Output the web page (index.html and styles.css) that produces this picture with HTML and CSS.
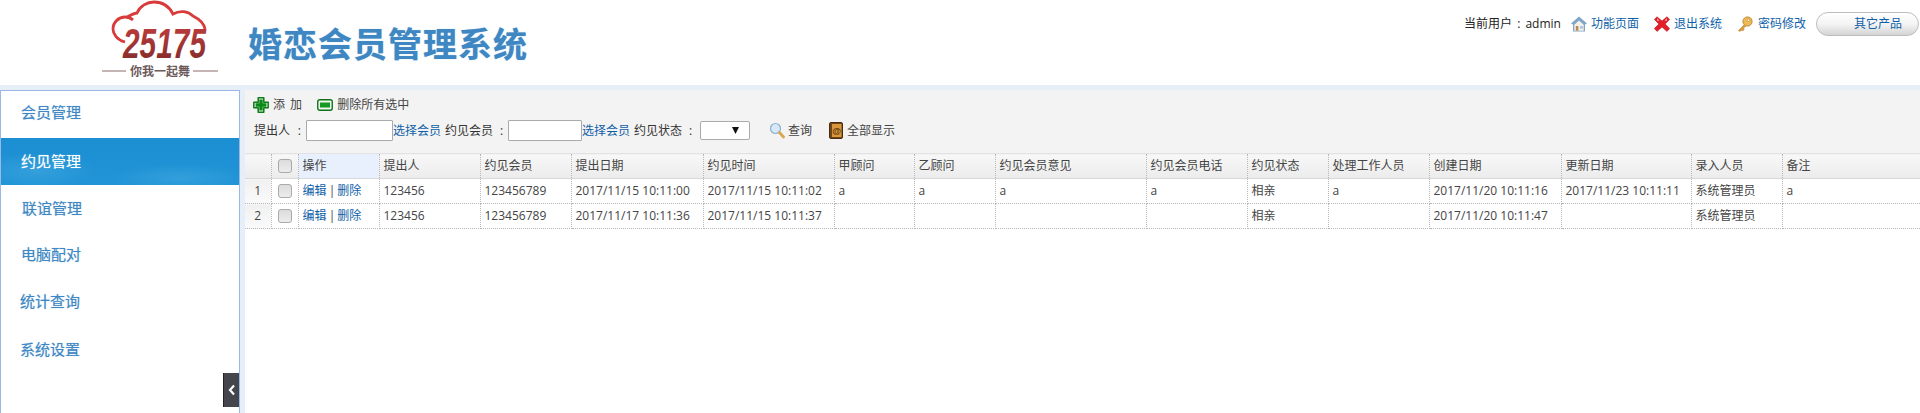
FILE: index.html
```html
<!DOCTYPE html>
<html lang="zh-CN">
<head>
<meta charset="utf-8">
<title>婚恋会员管理系统</title>
<link rel="stylesheet" href="styles.css">
</head>
<body>
<header class="top">
  <div class="brand">
    <svg class="logo" width="140" height="85" viewBox="0 0 140 85">
      <defs>
        <linearGradient id="dg" x1="0" y1="0" x2="0" y2="1">
          <stop offset="0" stop-color="#c8403f"/>
          <stop offset="1" stop-color="#7c2a2a"/>
        </linearGradient>
      </defs>
      <path d="M35 42 C27 40 23 34 23 29 C23 22 29 17 35 17 C38 17 41 18 43 20 M37 17 C41 15 44 13 47 13 C50 6 57 2 64 2 C72 2 79 6 83 14 C90 10 98 11 103 16 C109 19 114 23 115 29" fill="none" stroke="#d93b3b" stroke-width="2.8"/>
      <text x="33" y="58" class="logo-num" fill="url(#dg)" textLength="83" lengthAdjust="spacingAndGlyphs">25175</text>
      <path d="M12 71 H36 M103 71 H128" stroke="#8a6a6a" stroke-width="1"/>
      <text x="40" y="76" class="logo-sub" textLength="60">你我一起舞</text>
    </svg>
    <h1 class="title">婚恋会员管理系统</h1>
  </div>
  <nav class="tools">
    <span class="user">当前用户 : admin</span>
    <a class="tool t-home">
      <svg width="16" height="16" viewBox="0 0 16 16"><path d="M8 .5 L16 7.5 L14 8.5 L14 15.5 L2 15.5 L2 8.5 L0 7.5 Z" fill="#7ea6c8"/><path d="M3.3 8.8 L8 4.4 L12.7 8.8 V14.7 H3.3 Z" fill="#f4f1e8"/><rect x="4.8" y="10" width="2.6" height="4.7" fill="#b98a55"/><rect x="9" y="10.2" width="2.8" height="2.4" fill="#9ec0de"/></svg>
      <span>功能页面</span>
    </a>
    <a class="tool t-exit">
      <svg width="16" height="16" viewBox="0 0 16 16"><path d="M3 .8 L8 5 L13 .8 L15.6 3.4 L11.2 8 L15.6 12.6 L13 15.4 L8 11 L3 15.4 L.4 12.6 L4.8 8 L.4 3.4 Z" fill="#e3202a" stroke="#c1151d" stroke-width=".6"/><path d="M3 2.2 L5.5 4.4 L3 5 Z M13 2.2 L10.5 4.4 L13 5 Z" fill="#f3a0a4"/></svg>
      <span>退出系统</span>
    </a>
    <a class="tool t-key">
      <svg width="16" height="16" viewBox="0 0 16 16"><path d="M7 9 L1.5 14.5 L3 15.5 L4.5 14 L5.5 15 L7 13.5 L6.5 12 L9 10" fill="#dd9f3c" stroke="#b17a24" stroke-width=".6"/><circle cx="10.5" cy="5.5" r="4.6" fill="#efb954" stroke="#b17a24" stroke-width=".8"/><circle cx="11.5" cy="4.2" r="1.3" fill="#fff3cf" stroke="#b17a24" stroke-width=".5"/></svg>
      <span>密码修改</span>
    </a>
    <a class="other">其它产品</a>
  </nav>
</header>
<div class="band"></div>
<div class="body">
  <aside class="side">
    <ul class="menu">
      <li class="mi">会员管理</li>
      <li class="mi on">约见管理</li>
      <li class="mi">联谊管理</li>
      <li class="mi">电脑配对</li>
      <li class="mi">统计查询</li>
      <li class="mi">系统设置</li>
    </ul>
    <button class="collapse" type="button" aria-label="收起">
      <svg width="8" height="12" viewBox="0 0 8 12"><path d="M6 1.5 L2 6 L6 10.5" fill="none" stroke="#fff" stroke-width="2.2"/></svg>
    </button>
  </aside>
  <main class="main">
    <div class="bar">
      <div class="bar-row1">
        <a class="act a-add">
          <svg width="16" height="16" viewBox="0 0 16 16"><path d="M5.2 .8 H10.8 V5.2 H15.2 V10.8 H10.8 V15.2 H5.2 V10.8 H.8 V5.2 H5.2 Z" fill="#e6f6e2" stroke="#0f7a1a" stroke-width="1.5" stroke-linejoin="round"/><path d="M6.3 2.6 H9.7 V6.3 H13.4 V9.7 H9.7 V13.4 H6.3 V9.7 H2.6 V6.3 H6.3 Z" fill="#0a8a16"/></svg>
          <span class="add-label">添 加</span>
        </a>
        <a class="act a-del">
          <svg width="16" height="12" viewBox="0 0 16 12"><rect x=".75" y=".75" width="14.5" height="10.5" rx="2" fill="#f2f7ef" stroke="#0d7417" stroke-width="1.4"/><rect x="3" y="3.5" width="10" height="5" fill="#129a22"/></svg>
          <span>删除所有选中</span>
        </a>
      </div>
      <div class="bar-row2">
        <label class="lab l1">提出人</label><span class="colon">:</span>
        <input class="inp w1" type="text"><a class="link">选择会员</a>
        <label class="lab l2">约见会员</label><span class="colon c2">:</span>
        <input class="inp w2" type="text"><a class="link">选择会员</a>
        <label class="lab l2">约见状态</label><span class="colon c2">:</span>
        <span class="sel"><svg width="7" height="7" viewBox="0 0 7 7"><path d="M0 0 H7 L3.5 7 Z" fill="#111"/></svg></span>
        <a class="act a-search">
          <svg width="16" height="17" viewBox="0 0 16 17"><circle cx="6.5" cy="6.5" r="5" fill="#d7e9f8" stroke="#8eb0cc" stroke-width="1.2"/><path d="M10.5 10.5 L14.5 15" stroke="#d8a650" stroke-width="2.8" stroke-linecap="round"/></svg>
          <span>查询</span>
        </a>
        <a class="act a-all">
          <svg width="14" height="17" viewBox="0 0 14 17"><rect x=".5" y=".5" width="13" height="16" rx="1.5" fill="#6f4517" stroke="#4a2d0e"/><rect x="3" y="2" width="9.5" height="13" fill="#d9963a"/><text x="7.7" y="11.5" class="book-at">@</text></svg>
          <span>全部显示</span>
        </a>
      </div>
    </div>
    <table class="grid">
      <thead>
        <tr>
          <th class="num"></th>
          <th class="chk"><i class="box"></i></th>
          <th class="hl">操作</th>
          <th>提出人</th><th>约见会员</th><th>提出日期</th><th>约见时间</th><th>甲顾问</th><th>乙顾问</th><th>约见会员意见</th><th>约见会员电话</th><th>约见状态</th><th>处理工作人员</th><th>创建日期</th><th>更新日期</th><th>录入人员</th><th>备注</th>
        </tr>
      </thead>
      <tbody>
        <tr>
          <td class="num">1</td>
          <td class="chk"><i class="box"></i></td>
          <td class="ops"><a class="link">编辑</a> | <a class="link">删除</a></td>
          <td>123456</td><td>123456789</td><td>2017/11/15 10:11:00</td><td>2017/11/15 10:11:02</td><td>a</td><td>a</td><td>a</td><td>a</td><td>相亲</td><td>a</td><td>2017/11/20 10:11:16</td><td>2017/11/23 10:11:11</td><td>系统管理员</td><td>a</td>
        </tr>
        <tr>
          <td class="num">2</td>
          <td class="chk"><i class="box"></i></td>
          <td class="ops"><a class="link">编辑</a> | <a class="link">删除</a></td>
          <td>123456</td><td>123456789</td><td>2017/11/17 10:11:36</td><td>2017/11/15 10:11:37</td><td></td><td></td><td></td><td></td><td>相亲</td><td></td><td>2017/11/20 10:11:47</td><td></td><td>系统管理员</td><td></td>
        </tr>
      </tbody>
    </table>
  </main>
</div>
</body>
</html>
```
FILE: styles.css
```css
* { box-sizing: border-box; }
html, body { margin: 0; height: 100%; }
body {
  height: 413px;
  overflow: hidden;
  display: flex;
  flex-direction: column;
  font: 12px/16px "Open Sans", "Noto Sans CJK SC", sans-serif;
  color: #333;
  background: #fff;
}
a { color: #0f5fa8; text-decoration: none; }

/* header */
.top { height: 85px; display: flex; justify-content: space-between; background: #fff; }
.brand { display: flex; padding-left: 90px; }
.logo { display: block; overflow: visible; }
.logo-num { font: italic 700 43px "Liberation Sans", sans-serif; }
.logo-sub { font: 700 12px "Noto Sans CJK SC", sans-serif; fill: #6d5a5a; }
.book-at { font: 700 9px "Liberation Sans", sans-serif; fill: #5a3510; text-anchor: middle; }
.title {
  margin: 23px 0 0 18px;
  font: 700 34px/40px "Noto Sans CJK SC", sans-serif;
  letter-spacing: 1px;
  color: #3f87c3;
  text-shadow: 0 0 1px rgba(63, 135, 195, .6);
}
.tools { display: flex; align-items: center; height: 48px; padding-right: 1px; }
.user { margin-right: 10px; color: #222; word-spacing: 2px; }
.tool { display: flex; align-items: center; gap: 4px; margin-right: 15px; }
.t-home svg, .t-exit svg, .t-key svg { flex: none; }
.t-key { margin-right: 10px; gap: 5px; }
.other {
  width: 103px; height: 24px; line-height: 22px; padding-left: 37px;
  border: 1px solid #bdbdbd; border-radius: 12px;
  background: linear-gradient(180deg, #fff 0%, #f4f4f4 50%, #d4d4d4 100%);
}
.band { height: 5px; background: #e6eef8; flex: none; }

/* body */
.body { flex: 1; display: flex; background: #e6eef8; min-height: 0; }
.side {
  position: relative; width: 240px; flex: none;
  background: #fff;
  border: 1px solid #9bb8e4; border-bottom: 0;
}
.menu { list-style: none; margin: 0; padding: 0; }
.mi {
  height: 47px; line-height: 44px; padding-left: 20px;
  font-size: 15px; color: #3f87c3;
  text-shadow: 0 0 1px rgba(63, 135, 195, .5);
}
.mi:nth-child(1) { line-height: 42px; }
.mi:nth-child(2) { line-height: 46px; }
.mi:nth-child(3) { line-height: 46px; padding-left: 21px; }
.mi:nth-child(5) { padding-left: 19px; }
.mi:nth-child(6) { line-height: 46px; padding-left: 19px; }
.mi.on {
  color: #fff;
  text-shadow: 0 0 1px rgba(255, 255, 255, .5);
  background:
    radial-gradient(ellipse 60px 18px at 15% 70%, rgba(70, 170, 225, .55), transparent),
    radial-gradient(ellipse 70px 14px at 75% 85%, rgba(70, 170, 225, .5), transparent),
    linear-gradient(180deg, #1c8fd2, #2094d6);
}
.collapse {
  position: absolute; right: 0; top: 282px;
  width: 16px; height: 34px; padding: 0;
  display: flex; align-items: center; justify-content: center;
  border: 0; border-left: 1px solid #222;
  background: #45464b;
}
.main { flex: 1; margin-left: 5px; background: #fff; min-width: 0; }

/* toolbar */
.bar { height: 63px; padding: 6px 0 0 8px; background: #f3f3f3; }
.bar-row1 { display: flex; align-items: center; height: 18px; }
.bar-row2 { display: flex; align-items: center; height: 21px; margin-top: 6px; }
.act { display: flex; align-items: center; gap: 4px; color: #444; white-space: nowrap; }
.add-label { word-spacing: 2px; }
.a-del { margin-left: 15px; }
.lab { color: #333; white-space: nowrap; }
.l1 { margin-left: 1px; }
.l2 { margin-left: 4px; }
.colon { flex: none; width: 16px; padding-right: 5px; text-align: right; }
.c2 { width: 15px; }
.inp { height: 21px; padding: 0; border: 1px solid #aaa; background: #fff; border-radius: 1px; }
.w1 { width: 87px; }
.w2 { width: 74px; }
.bar-row2 .link { white-space: nowrap; }
.sel {
  display: flex; align-items: center; justify-content: flex-end;
  width: 50px; height: 19px; padding-right: 10px; margin-left: 3px;
  border: 1px solid #aaa; border-radius: 2px; background: #fff;
}
.a-search { margin-left: 19px; gap: 3px; }
.a-all { margin-left: 17px; }

/* table */
.grid { width: 1675px; table-layout: fixed; border-collapse: collapse; color: #444; }
.grid th, .grid td {
  height: 25px; padding: 0 0 0 4px; text-align: left; font-weight: 400; white-space: nowrap;
  border-right: 1px dotted #b8b8b8; border-bottom: 1px dotted #b8b8b8;
}
.grid th {
  border-bottom: 1px solid #d8d8d8; border-top: 1px solid #e2e2e2;
  background: linear-gradient(180deg, #f8f8f8, #ececec);
}
.grid th.hl { background: #e8f0fe; }
.grid th:last-child, .grid td:last-child { border-right: 0; }
.grid td.ops { word-spacing: -1px; }
.grid td.num { padding: 0; text-align: center; background: linear-gradient(180deg, #f0f0f0, #fafafa); }
.grid th.num { padding: 0; }
.grid .chk { padding: 0; text-align: center; }
.box {
  display: block; width: 14px; height: 14px; margin: 0 auto;
  border: 1px solid #aaa; border-radius: 3px;
  background: linear-gradient(180deg, #dcdcdc, #ececec);
}
.grid th:nth-child(1) { width: 26px; }
.grid th:nth-child(2) { width: 27px; }
.grid th:nth-child(3) { width: 81px; }
.grid th:nth-child(4) { width: 101px; }
.grid th:nth-child(5) { width: 91px; }
.grid th:nth-child(6) { width: 132px; }
.grid th:nth-child(7) { width: 131px; }
.grid th:nth-child(8) { width: 80px; }
.grid th:nth-child(9) { width: 81px; }
.grid th:nth-child(10) { width: 151px; }
.grid th:nth-child(11) { width: 101px; }
.grid th:nth-child(12) { width: 81px; }
.grid th:nth-child(13) { width: 101px; }
.grid th:nth-child(14) { width: 132px; }
.grid th:nth-child(15) { width: 130px; }
.grid th:nth-child(16) { width: 91px; }
.grid th:nth-child(17) { width: 138px; }
```
